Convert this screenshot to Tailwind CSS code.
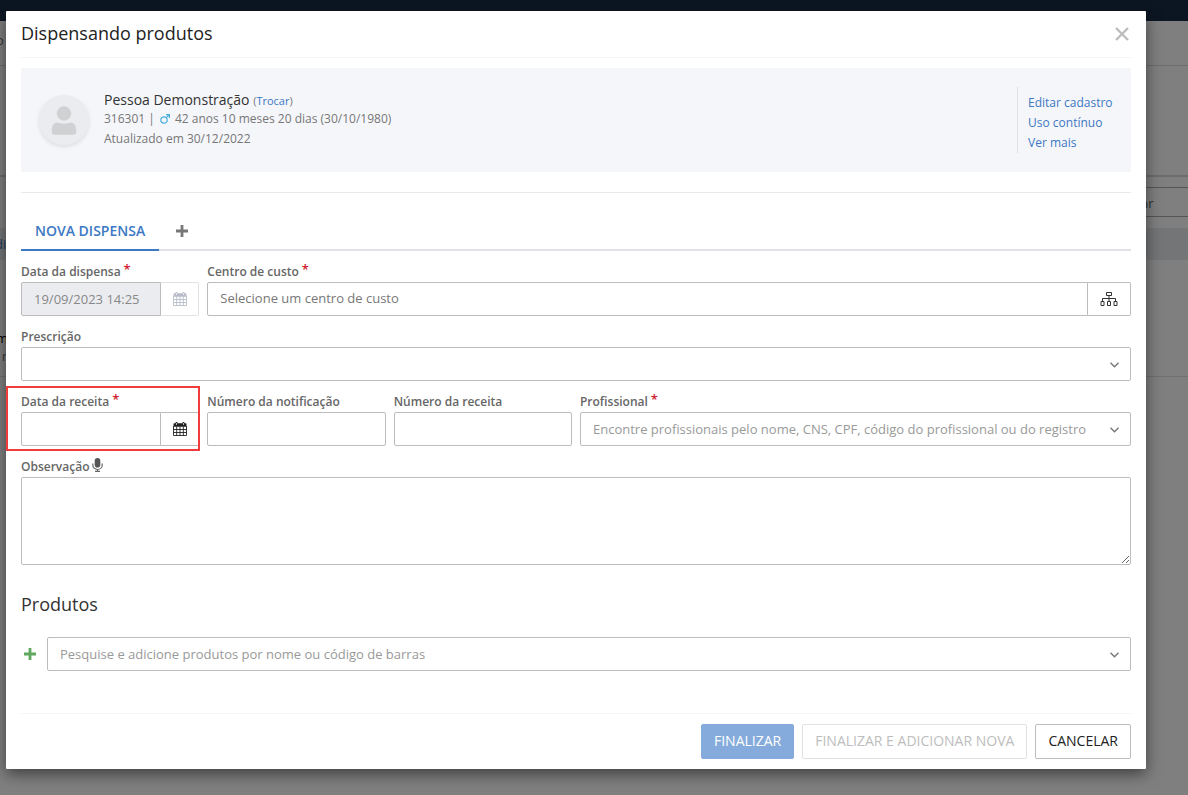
<!DOCTYPE html>
<html lang="pt-BR">
<head>
<meta charset="utf-8">
<title>Dispensando produtos</title>
<script src="https://cdn.jsdelivr.net/npm/@tailwindcss/browser@4"></script>
</head>
<body class="relative min-h-screen overflow-x-hidden bg-[#7f7f7f] font-['Open_Sans',sans-serif] text-[13px] text-[#666]">

<!-- Page behind the dialog -->
<div class="absolute inset-0 overflow-hidden text-[#333]" aria-hidden="true">
  <div class="h-[21px] bg-[#0c1622]"></div>
  <div class="h-[45px] border-b border-[#6c6c6c] pt-[10px]"><span class="-ml-1">o</span></div>
  <div class="h-[111px] border-b-2 border-[#6c6c6c]"></div>
  <div class="flex h-[51px] items-start justify-end pt-[10px]">
    <div class="h-[30px] w-[75px] border border-r-0 border-[#555] pl-[27px] leading-[30px]">ar</div>
  </div>
  <div class="h-8 bg-[#747577] leading-8 text-[#1f3a5c]"><span class="-ml-[5px]">di</span></div>
  <div class="h-[117px] border-b border-[#707070] pt-[69px] leading-[18px]"><div class="-ml-1 text-black">m</div><div class="pl-[2px] text-xs leading-5">r</div></div>
</div>

<!-- Dialog -->
<main class="relative mt-[11px] mr-[42px] mb-[26px] ml-[6px] rounded-[1px] bg-white px-[15px] pb-[10px] shadow-[0_5px_15px_rgba(0,0,0,0.5)]" role="dialog" aria-labelledby="titulo">
  <header class="flex h-[47px] items-center justify-between border-b border-[#f4f4f6]">
    <h1 id="titulo" class="pb-[2px] text-lg leading-6 text-[#222]">Dispensando produtos</h1>
    <button type="button" aria-label="Fechar" class="flex h-6 w-4 items-center text-[#bdbdbd]">
      <svg class="size-[14px]" viewBox="0 0 14 14" fill="none" stroke="currentColor" stroke-width="2.400"><path d="M1 1l12 12M13 1L1 13"/></svg>
    </button>
  </header>

  <section class="mt-[10px] flex h-[104px] items-center rounded-[2px] bg-[#f5f6fa] px-[18px]">
    <div class="flex size-[50px] shrink-0 items-center justify-center rounded-full bg-[#ebecf0] shadow-[0_2px_4px_rgba(0,0,0,0.1)]">
      <svg class="h-[30px] w-[26px]" viewBox="0 0 26 30" fill="#d0d1d3"><circle cx="13" cy="8.500" r="7.200"/><path d="M6.500 17.500c2 .1 3.500 1.200 6.500 1.200s4.500-1.100 6.500-1.200c3.500 0 5.700 3 5.700 7.500v2q0 2.700-2.700 2.700h-19Q.8 29.700.8 27v-2c0-4.500 2.200-7.500 5.700-7.500z"/></svg>
    </div>
    <div class="ml-[15px] flex-1 pb-px text-xs leading-5 text-[#777]">
      <p class="text-sm leading-[17px] text-[#333]">Pessoa Demonstração <span class="text-[11px] text-[#777]">(<a href="#" class="text-[#3c78c3]">Trocar</a>)</span></p>
      <p class="flex items-center">316301 |
        <svg class="mx-[5px] size-[10px]" viewBox="0 0 10 10" fill="none" stroke="#47afdc" stroke-width="1.200" role="img" aria-label="Masculino"><circle cx="4" cy="6" r="3.200"/><path d="M6.300 3.700L9.300.7M6 .7h3.400v3.400"/></svg>
        42 anos 10 meses 20 dias (30/10/1980)</p>
      <p>Atualizado em 30/12/2022</p>
    </div>
    <nav class="flex h-[66px] w-24 flex-col justify-end border-l border-[#dfe0e5] pt-[7px] pl-[10px] text-xs leading-5 whitespace-nowrap text-[#3c78c3]">
      <a href="#">Editar cadastro</a>
      <a href="#">Uso contínuo</a>
      <a href="#">Ver mais</a>
    </nav>
  </section>

  <hr class="mt-5 border-[#eaeaed]">

  <div class="mt-[18px] flex h-10 border-b-2 border-[#e1e2e7]" role="tablist">
    <button type="button" role="tab" aria-selected="true" class="h-10 border-b-2 border-[#3c78c3] px-[14px] pt-[2px] text-sm font-semibold text-[#3c78c3]">NOVA DISPENSA</button>
    <button type="button" aria-label="Adicionar dispensa" class="ml-[17px] flex h-10 items-center pb-px text-[#777]">
      <svg class="size-3" viewBox="0 0 12 12" fill="none" stroke="currentColor" stroke-width="2.800"><path d="M6 0v12M0 6h12"/></svg>
    </button>
  </div>

  <form class="mt-[9px]">
    <div class="grid grid-cols-12 gap-x-2 gap-y-[9px]">
      <div class="col-span-2">
        <label for="dispensa" class="flex h-[22px] text-xs leading-6 font-semibold">Data da dispensa<span class="ml-[3px] text-[13px] leading-[18px] text-[#d0202e]">*</span></label>
        <div class="flex h-[34px]">
          <input id="dispensa" value="19/09/2023 14:25" disabled class="w-0 flex-1 rounded-l-[2px] border border-[#bcbcbc] bg-[#ebecf0] px-3 pt-px text-[#888]">
          <button type="button" disabled aria-label="Abrir calendário da dispensa" class="flex w-[38px] items-center justify-center rounded-r-[2px] border border-l-0 border-[#e1e2e5] text-[#b9bdc9]">
            <svg class="size-[14px]" viewBox="0 0 14 14" fill="none" stroke="currentColor"><path fill="currentColor" stroke="none" d="M.5 2q0-.7.7-.7h1.300V.8q0-.8.8-.8h.4q.8 0 .8.800v.5h5V.8q0-.8.800-.8h.4q.8 0 .8.800v.5h1.300q.7 0 .7.700v2.700H.5z"/><path stroke="white" stroke-width=".7" d="M3.500 1v2M10.500 1v2"/><path stroke-width=".9" d="M.5 4v9.500h13V4M3.700 4.500v9M7 4.500v9M10.300 4.500v9M.5 7.500h13M.5 10.500h13"/></svg>
          </button>
        </div>
      </div>
      <div class="col-span-10">
        <label for="centro" class="flex h-[22px] text-xs leading-6 font-semibold">Centro de custo<span class="ml-[3px] text-[13px] leading-[18px] text-[#d0202e]">*</span></label>
        <div class="flex h-[34px]">
          <input id="centro" placeholder="Selecione um centro de custo" class="w-0 flex-1 rounded-l-[2px] border border-[#bcbcbc] px-3 pb-px placeholder:text-[#777]">
          <button type="button" aria-label="Ver centros de custo" class="flex w-[43px] items-center justify-center rounded-r-[2px] border border-l-0 border-[#bcbcbc] text-[#333]">
            <svg class="h-[14px] w-[18px]" viewBox="0 0 18 14" fill="none" stroke="currentColor"><path d="M6.500.5h5v3h-5zM9 3.500v6M2.500 9.500v-3h13v3M1 9.500h3v4H1zM7.500 9.500h3v4h-3zM14 9.500h3v4h-3z"/></svg>
          </button>
        </div>
      </div>

      <div class="col-span-12">
        <label for="prescricao" class="flex h-[22px] text-xs leading-6 font-semibold">Prescrição</label>
        <div class="relative h-[34px]">
          <select id="prescricao" class="h-full w-full appearance-none rounded-[2px] border border-[#bcbcbc] bg-white px-3"><option></option></select>
          <svg class="pointer-events-none absolute top-[15px] right-3 h-[6px] w-[9px]" viewBox="0 0 9 6" fill="none" stroke="#777" stroke-width="1.400"><path d="M.5.7l4 4 4-4"/></svg>
        </div>
      </div>

      <div class="relative col-span-2">
        <label for="receita" class="flex h-[22px] text-xs leading-6 font-semibold">Data da receita<span class="ml-[3px] text-[13px] leading-[18px] text-[#d0202e]">*</span></label>
        <div class="flex h-[34px]">
          <input id="receita" class="w-0 flex-1 rounded-l-[2px] border border-[#bcbcbc] px-3">
          <button type="button" aria-label="Abrir calendário da receita" class="flex w-[38px] items-center justify-center rounded-r-[2px] border border-l-0 border-[#bcbcbc] text-[#222]">
            <svg class="size-[14px]" viewBox="0 0 14 14" fill="none" stroke="currentColor"><path fill="currentColor" stroke="none" d="M.5 2q0-.7.7-.7h1.300V.8q0-.8.8-.8h.4q.8 0 .8.800v.5h5V.8q0-.8.800-.8h.4q.8 0 .8.800v.5h1.300q.7 0 .7.700v2.700H.5z"/><path stroke="white" stroke-width=".7" d="M3.500 1v2M10.500 1v2"/><path stroke-width=".9" d="M.5 4v9.500h13V4M3.700 4.500v9M7 4.500v9M10.300 4.500v9M.5 7.500h13M.5 10.500h13"/></svg>
          </button>
        </div>
        <!-- Highlight around the required date -->
        <div class="pointer-events-none absolute -top-1 -right-px -bottom-[5px] -left-[15px] border-2 border-[#f23c3a]"></div>
      </div>
      <div class="col-span-2">
        <label for="notificacao" class="flex h-[22px] text-xs leading-6 font-semibold whitespace-nowrap">Número da notificação</label>
        <input id="notificacao" class="block h-[34px] w-full rounded-[2px] border border-[#bcbcbc] px-3">
      </div>
      <div class="col-span-2">
        <label for="numero" class="flex h-[22px] text-xs leading-6 font-semibold whitespace-nowrap">Número da receita</label>
        <input id="numero" class="block h-[34px] w-full rounded-[2px] border border-[#bcbcbc] px-3">
      </div>
      <div class="col-span-6">
        <label for="profissional" class="flex h-[22px] text-xs leading-6 font-semibold">Profissional<span class="ml-[3px] text-[13px] leading-[18px] text-[#d0202e]">*</span></label>
        <div class="relative h-[34px]">
          <select id="profissional" class="h-full w-full appearance-none rounded-[2px] border border-[#bcbcbc] bg-white px-3 pt-px text-[#999]"><option>Encontre profissionais pelo nome, CNS, CPF, código do profissional ou do registro</option></select>
          <svg class="pointer-events-none absolute top-[15px] right-3 h-[6px] w-[9px]" viewBox="0 0 9 6" fill="none" stroke="#777" stroke-width="1.400"><path d="M.5.7l4 4 4-4"/></svg>
        </div>
      </div>

      <div class="col-span-12">
        <label for="observacao" class="flex h-[22px] text-xs leading-6 font-semibold">Observação
          <svg class="mt-[3px] ml-[3px] h-[14px] w-[11px]" viewBox="0 0 11 14"><rect x="2.700" width="5.600" height="9.500" rx="2.800" fill="#555"/><path d="M.8 5.500v1.500a4.700 4.500 0 0 0 9.400 0V5.500M5.500 11.500v2M3 13.400h5" fill="none" stroke="#666" stroke-width="1.200"/></svg>
        </label>
        <textarea id="observacao" class="block h-[88px] w-full resize-y rounded-[2px] border border-[#bcbcbc] px-3 py-2"></textarea>
      </div>
    </div>

    <h2 class="mt-[27px] text-lg leading-6 text-[#333]">Produtos</h2>

    <div class="mt-[21px] flex h-[34px] items-center">
      <button type="button" aria-label="Adicionar produto" class="flex w-[26px] pl-[3px] text-[#5fa95f]">
        <svg class="size-3" viewBox="0 0 12 12" fill="none" stroke="currentColor" stroke-width="2.800"><path d="M6 0v12M0 6h12"/></svg>
      </button>
      <div class="relative h-full flex-1">
        <select aria-label="Produto" class="h-full w-full appearance-none rounded-[2px] border border-[#bcbcbc] bg-white px-3 pt-px text-[#999]"><option>Pesquise e adicione produtos por nome ou código de barras</option></select>
        <svg class="pointer-events-none absolute top-[15px] right-3 h-[6px] w-[9px]" viewBox="0 0 9 6" fill="none" stroke="#777" stroke-width="1.400"><path d="M.5.7l4 4 4-4"/></svg>
      </div>
    </div>

    <footer class="mt-[42px] flex justify-end gap-2 border-t border-[#f4f4f6] pt-[10px] text-sm">
      <button type="submit" disabled class="h-[35px] rounded-[2px] border border-[#84abdb] bg-[#84abdb] px-3 pb-[2px] text-white">FINALIZAR</button>
      <button type="button" disabled class="h-[35px] rounded-[2px] border border-[#e1e2e5] px-3 pb-[2px] text-[#bdbdbd]">FINALIZAR E ADICIONAR NOVA</button>
      <button type="button" class="h-[35px] rounded-[2px] border border-[#bcbcbc] px-3 pb-[2px] text-[#222]">CANCELAR</button>
    </footer>
  </form>
</main>
</body>
</html>
